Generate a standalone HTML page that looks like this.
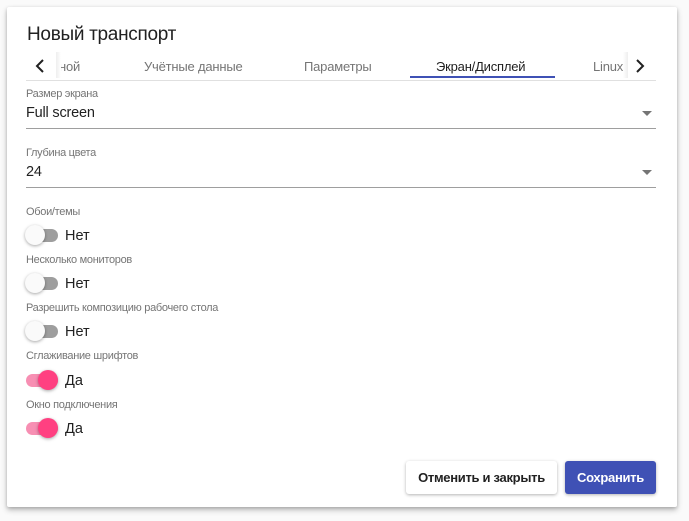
<!DOCTYPE html>
<html><head><meta charset="utf-8"><style>
*{box-sizing:border-box;margin:0;padding:0}
body{width:689px;height:521px;background:#fafafa;font-family:"Liberation Sans",sans-serif;position:relative;overflow:hidden;color:#212121}
.dlg{position:absolute;left:7px;top:7px;width:670px;height:500px;background:#fff;box-shadow:0 3px 6px rgba(0,0,0,.25),0 1px 3px rgba(0,0,0,.15);border-radius:2px}
.a{position:absolute;white-space:nowrap}
.title{left:27px;top:24px;font-size:19px;color:#212121;letter-spacing:-0.3px}
.tab{top:59px;font-size:13px;color:#757575;letter-spacing:-0.2px}
.lbl{font-size:11px;color:#757575;letter-spacing:-0.3px}
.val{font-size:14.5px;color:#212121;letter-spacing:-0.2px}
.line{position:absolute;left:26px;width:630px;height:1px;background:#9e9e9e}
.caret{position:absolute;left:642px;width:0;height:0;border-left:5px solid transparent;border-right:5px solid transparent;border-top:5px solid #757575}
.tr{position:absolute;left:26px;width:32px;height:13px;border-radius:7px}
.th{position:absolute;width:20px;height:20px;border-radius:50%;box-shadow:0 1px 3px rgba(0,0,0,.35)}
.off .tr{background:#9e9e9e}.off .th{left:25px;background:#fafafa}
.on .tr{background:#f78fb3}.on .th{left:38px;background:#ff4081}
.tv{position:absolute;left:65px;font-size:14.5px;color:#212121}
.btn{position:absolute;top:461px;height:33px;border-radius:3px;font-size:13px;font-weight:bold;text-align:center;line-height:33px;letter-spacing:-0.3px}
</style></head><body>
<div class="dlg"></div>
<div class="a title">Новый транспорт</div>
<svg class="a" style="left:34px;top:58px" width="12" height="16"><path d="M9 2L3 8l6 6" stroke="#212121" stroke-width="2" fill="none"/></svg>
<div class="a tab" style="left:59px">ной</div>
<div class="a" style="left:56px;top:52px;width:5px;height:26px;background:linear-gradient(90deg,#eee,#fff)"></div>
<div class="a tab" style="left:144px">Учётные данные</div>
<div class="a tab" style="left:304px">Параметры</div>
<div class="a tab" style="left:436px;color:#212121">Экран/Дисплей</div>
<div class="a tab" style="left:593px">Linux</div>
<div class="a" style="left:623px;top:52px;width:5px;height:26px;background:linear-gradient(90deg,#fff,#eee)"></div>
<svg class="a" style="left:634px;top:58px" width="12" height="16"><path d="M3 2l6 6-6 6" stroke="#212121" stroke-width="2" fill="none"/></svg>
<div class="a" style="left:410px;top:76px;width:145px;height:2px;background:#3f51b5"></div>
<div class="line" style="top:80px;background:#e0e0e0"></div>

<div class="a lbl" style="left:26px;top:88px">Размер экрана</div>
<div class="a val" style="left:26px;top:105px">Full screen</div>
<div class="caret" style="top:111px"></div>
<div class="line" style="top:128px"></div>

<div class="a lbl" style="left:26px;top:147px">Глубина цвета</div>
<div class="a val" style="left:26px;top:164px">24</div>
<div class="caret" style="top:170px"></div>
<div class="line" style="top:187px"></div>

<div class="a lbl" style="left:26px;top:206px">Обои/темы</div>
<div class="off"><div class="tr" style="top:229px"></div><div class="th" style="top:225px"></div></div>
<div class="tv" style="top:228px">Нет</div>

<div class="a lbl" style="left:26px;top:254px">Несколько мониторов</div>
<div class="off"><div class="tr" style="top:277px"></div><div class="th" style="top:273px"></div></div>
<div class="tv" style="top:276px">Нет</div>

<div class="a lbl" style="left:26px;top:302px">Разрешить композицию рабочего стола</div>
<div class="off"><div class="tr" style="top:325px"></div><div class="th" style="top:321px"></div></div>
<div class="tv" style="top:324px">Нет</div>

<div class="a lbl" style="left:26px;top:350px">Сглаживание шрифтов</div>
<div class="on"><div class="tr" style="top:374px"></div><div class="th" style="top:370px"></div></div>
<div class="tv" style="top:373px">Да</div>

<div class="a lbl" style="left:26px;top:399px">Окно подключения</div>
<div class="on"><div class="tr" style="top:422px"></div><div class="th" style="top:418px"></div></div>
<div class="tv" style="top:421px">Да</div>

<div class="btn" style="left:406px;width:151px;background:#fff;color:#212121;box-shadow:0 1px 3px rgba(0,0,0,.3)">Отменить и закрыть</div>
<div class="btn" style="left:565px;width:91px;background:#3f51b5;color:#fff;box-shadow:0 1px 3px rgba(0,0,0,.3)">Сохранить</div>
</body></html>
